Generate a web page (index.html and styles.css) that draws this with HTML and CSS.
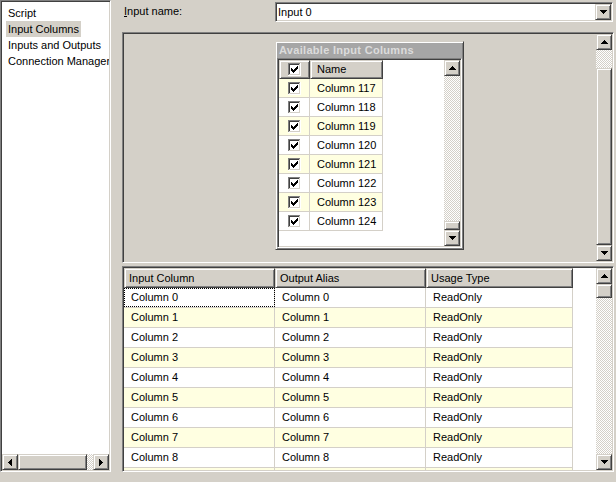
FILE: index.html
```html
<!DOCTYPE html>
<html>
<head>
<meta charset="utf-8">
<link rel="stylesheet" href="styles.css">
</head>
<body>
<div class="app">
  <div class="nav sunken">
    <div class="nav-items">
      <div class="nav-item"><span>Script</span></div>
      <div class="nav-item"><span class="sel">Input Columns</span></div>
      <div class="nav-item"><span>Inputs and Outputs</span></div>
      <div class="nav-item"><span>Connection Managers</span></div>
    </div>
    <div class="hscroll">
      <div class="btn"><svg class="arrow" width="4" height="7"><path d="M3 0h1v7H3V6H2V5H1V4H0V3h1V2h1V1h1z"/></svg></div>
      <div class="hthumb raised"></div>
      <div class="dither"></div>
      <div class="btn"><svg class="arrow" width="4" height="7"><path d="M0 0h1v1h1v1h1v1h1v1H3v1H2v1H1v1H0z"/></svg></div>
    </div>
  </div>

  <div class="main">
    <div class="name-row">
      <div class="name-label"><u>I</u>nput name:</div>
      <div class="combo sunken">
        <span class="combo-text">Input 0</span>
        <div class="btn"><svg class="arrow" width="7" height="4"><path d="M0 0h7v1H6v1H5v1H4v1H3V3H2V2H1V1H0z"/></svg></div>
      </div>
    </div>

    <div class="panel sunken">
      <div class="panel-canvas">
        <div class="avail raised">
          <div class="avail-title">Available Input Columns</div>
          <div class="lv sunken">
            <div class="lv-body">
              <div class="lv-head">
                <div class="lv-hcheck raised">
                  <svg class="cb" width="13" height="13" viewBox="0 0 13 13" shape-rendering="crispEdges"><rect width="13" height="13" fill="#fff"/><path d="M0 0h12v1H1v11H0z" fill="#808080"/><path d="M1 1h10v1H2v9H1z" fill="#404040"/><path d="M12 0h1v13H0v-1h12z" fill="#fff"/><path d="M11 1h1v11H1v-1h10z" fill="#d4d0c8"/><path d="M9 3h1v1H9zM8 4h2v1H8zM3 5h1v1H3zM7 5h3v1H7zM3 6h2v1H3zM6 6h3v1H6zM3 7h5v1H3zM4 8h3v1H4zM5 9h1v1H5z" fill="#000"/></svg>
                </div>
                <div class="lv-hname raised">Name</div>
              </div>
              <div class="lv-row alt"><div class="lv-c1"><svg class="cb" width="13" height="13" viewBox="0 0 13 13" shape-rendering="crispEdges"><rect width="13" height="13" fill="#fff"/><path d="M0 0h12v1H1v11H0z" fill="#808080"/><path d="M1 1h10v1H2v9H1z" fill="#404040"/><path d="M12 0h1v13H0v-1h12z" fill="#fff"/><path d="M11 1h1v11H1v-1h10z" fill="#d4d0c8"/><path d="M9 3h1v1H9zM8 4h2v1H8zM3 5h1v1H3zM7 5h3v1H7zM3 6h2v1H3zM6 6h3v1H6zM3 7h5v1H3zM4 8h3v1H4zM5 9h1v1H5z" fill="#000"/></svg></div><div class="lv-c2">Column 117</div></div>
              <div class="lv-row"><div class="lv-c1"><svg class="cb" width="13" height="13" viewBox="0 0 13 13" shape-rendering="crispEdges"><rect width="13" height="13" fill="#fff"/><path d="M0 0h12v1H1v11H0z" fill="#808080"/><path d="M1 1h10v1H2v9H1z" fill="#404040"/><path d="M12 0h1v13H0v-1h12z" fill="#fff"/><path d="M11 1h1v11H1v-1h10z" fill="#d4d0c8"/><path d="M9 3h1v1H9zM8 4h2v1H8zM3 5h1v1H3zM7 5h3v1H7zM3 6h2v1H3zM6 6h3v1H6zM3 7h5v1H3zM4 8h3v1H4zM5 9h1v1H5z" fill="#000"/></svg></div><div class="lv-c2">Column 118</div></div>
              <div class="lv-row alt"><div class="lv-c1"><svg class="cb" width="13" height="13" viewBox="0 0 13 13" shape-rendering="crispEdges"><rect width="13" height="13" fill="#fff"/><path d="M0 0h12v1H1v11H0z" fill="#808080"/><path d="M1 1h10v1H2v9H1z" fill="#404040"/><path d="M12 0h1v13H0v-1h12z" fill="#fff"/><path d="M11 1h1v11H1v-1h10z" fill="#d4d0c8"/><path d="M9 3h1v1H9zM8 4h2v1H8zM3 5h1v1H3zM7 5h3v1H7zM3 6h2v1H3zM6 6h3v1H6zM3 7h5v1H3zM4 8h3v1H4zM5 9h1v1H5z" fill="#000"/></svg></div><div class="lv-c2">Column 119</div></div>
              <div class="lv-row"><div class="lv-c1"><svg class="cb" width="13" height="13" viewBox="0 0 13 13" shape-rendering="crispEdges"><rect width="13" height="13" fill="#fff"/><path d="M0 0h12v1H1v11H0z" fill="#808080"/><path d="M1 1h10v1H2v9H1z" fill="#404040"/><path d="M12 0h1v13H0v-1h12z" fill="#fff"/><path d="M11 1h1v11H1v-1h10z" fill="#d4d0c8"/><path d="M9 3h1v1H9zM8 4h2v1H8zM3 5h1v1H3zM7 5h3v1H7zM3 6h2v1H3zM6 6h3v1H6zM3 7h5v1H3zM4 8h3v1H4zM5 9h1v1H5z" fill="#000"/></svg></div><div class="lv-c2">Column 120</div></div>
              <div class="lv-row alt"><div class="lv-c1"><svg class="cb" width="13" height="13" viewBox="0 0 13 13" shape-rendering="crispEdges"><rect width="13" height="13" fill="#fff"/><path d="M0 0h12v1H1v11H0z" fill="#808080"/><path d="M1 1h10v1H2v9H1z" fill="#404040"/><path d="M12 0h1v13H0v-1h12z" fill="#fff"/><path d="M11 1h1v11H1v-1h10z" fill="#d4d0c8"/><path d="M9 3h1v1H9zM8 4h2v1H8zM3 5h1v1H3zM7 5h3v1H7zM3 6h2v1H3zM6 6h3v1H6zM3 7h5v1H3zM4 8h3v1H4zM5 9h1v1H5z" fill="#000"/></svg></div><div class="lv-c2">Column 121</div></div>
              <div class="lv-row"><div class="lv-c1"><svg class="cb" width="13" height="13" viewBox="0 0 13 13" shape-rendering="crispEdges"><rect width="13" height="13" fill="#fff"/><path d="M0 0h12v1H1v11H0z" fill="#808080"/><path d="M1 1h10v1H2v9H1z" fill="#404040"/><path d="M12 0h1v13H0v-1h12z" fill="#fff"/><path d="M11 1h1v11H1v-1h10z" fill="#d4d0c8"/><path d="M9 3h1v1H9zM8 4h2v1H8zM3 5h1v1H3zM7 5h3v1H7zM3 6h2v1H3zM6 6h3v1H6zM3 7h5v1H3zM4 8h3v1H4zM5 9h1v1H5z" fill="#000"/></svg></div><div class="lv-c2">Column 122</div></div>
              <div class="lv-row alt"><div class="lv-c1"><svg class="cb" width="13" height="13" viewBox="0 0 13 13" shape-rendering="crispEdges"><rect width="13" height="13" fill="#fff"/><path d="M0 0h12v1H1v11H0z" fill="#808080"/><path d="M1 1h10v1H2v9H1z" fill="#404040"/><path d="M12 0h1v13H0v-1h12z" fill="#fff"/><path d="M11 1h1v11H1v-1h10z" fill="#d4d0c8"/><path d="M9 3h1v1H9zM8 4h2v1H8zM3 5h1v1H3zM7 5h3v1H7zM3 6h2v1H3zM6 6h3v1H6zM3 7h5v1H3zM4 8h3v1H4zM5 9h1v1H5z" fill="#000"/></svg></div><div class="lv-c2">Column 123</div></div>
              <div class="lv-row"><div class="lv-c1"><svg class="cb" width="13" height="13" viewBox="0 0 13 13" shape-rendering="crispEdges"><rect width="13" height="13" fill="#fff"/><path d="M0 0h12v1H1v11H0z" fill="#808080"/><path d="M1 1h10v1H2v9H1z" fill="#404040"/><path d="M12 0h1v13H0v-1h12z" fill="#fff"/><path d="M11 1h1v11H1v-1h10z" fill="#d4d0c8"/><path d="M9 3h1v1H9zM8 4h2v1H8zM3 5h1v1H3zM7 5h3v1H7zM3 6h2v1H3zM6 6h3v1H6zM3 7h5v1H3zM4 8h3v1H4zM5 9h1v1H5z" fill="#000"/></svg></div><div class="lv-c2">Column 124</div></div>
            </div>
            <div class="vscroll">
              <div class="btn"><svg class="arrow" width="7" height="4"><path d="M3 0h1v1h1v1h1v1h1v1H0V3h1V2h1V1h1z"/></svg></div>
              <div class="dither"></div>
              <div class="lv-thumb raised"></div>
              <div class="btn"><svg class="arrow" width="7" height="4"><path d="M0 0h7v1H6v1H5v1H4v1H3V3H2V2H1V1H0z"/></svg></div>
            </div>
          </div>
        </div>
      </div>
      <div class="vscroll">
        <div class="btn"><svg class="arrow" width="7" height="4"><path d="M3 0h1v1h1v1h1v1h1v1H0V3h1V2h1V1h1z"/></svg></div>
        <div class="dither panel-dither"></div>
        <div class="panel-thumb raised"></div>
        <div class="btn"><svg class="arrow" width="7" height="4"><path d="M0 0h7v1H6v1H5v1H4v1H3V3H2V2H1V1H0z"/></svg></div>
      </div>
    </div>

    <div class="grid sunken">
      <div class="grid-body">
        <div class="g-head">
          <div class="g-h raised w1">Input Column</div>
          <div class="g-h raised w2">Output Alias</div>
          <div class="g-h raised w3">Usage Type</div>
        </div>
        <div class="g-row"><div class="g-c w1 focus">Column 0</div><div class="g-c w2">Column 0</div><div class="g-c w3">ReadOnly</div></div>
        <div class="g-row alt"><div class="g-c w1">Column 1</div><div class="g-c w2">Column 1</div><div class="g-c w3">ReadOnly</div></div>
        <div class="g-row"><div class="g-c w1">Column 2</div><div class="g-c w2">Column 2</div><div class="g-c w3">ReadOnly</div></div>
        <div class="g-row alt"><div class="g-c w1">Column 3</div><div class="g-c w2">Column 3</div><div class="g-c w3">ReadOnly</div></div>
        <div class="g-row"><div class="g-c w1">Column 4</div><div class="g-c w2">Column 4</div><div class="g-c w3">ReadOnly</div></div>
        <div class="g-row alt"><div class="g-c w1">Column 5</div><div class="g-c w2">Column 5</div><div class="g-c w3">ReadOnly</div></div>
        <div class="g-row"><div class="g-c w1">Column 6</div><div class="g-c w2">Column 6</div><div class="g-c w3">ReadOnly</div></div>
        <div class="g-row alt"><div class="g-c w1">Column 7</div><div class="g-c w2">Column 7</div><div class="g-c w3">ReadOnly</div></div>
        <div class="g-row"><div class="g-c w1">Column 8</div><div class="g-c w2">Column 8</div><div class="g-c w3">ReadOnly</div></div>
        <div class="g-row alt"><div class="g-c w1">Column 9</div><div class="g-c w2">Column 9</div><div class="g-c w3">ReadOnly</div></div>
      </div>
      <div class="vscroll">
        <div class="btn"><svg class="arrow" width="7" height="4"><path d="M3 0h1v1h1v1h1v1h1v1H0V3h1V2h1V1h1z"/></svg></div>
        <div class="grid-thumb raised"></div>
        <div class="dither"></div>
        <div class="btn"><svg class="arrow" width="7" height="4"><path d="M0 0h7v1H6v1H5v1H4v1H3V3H2V2H1V1H0z"/></svg></div>
      </div>
    </div>
  </div>
</div>
</body>
</html>
```
FILE: styles.css
```css
* { box-sizing: border-box; }
html, body { margin: 0; height: 100%; }
body {
  background: #d4d0c8;
  font-family: "Liberation Sans", Arial, sans-serif;
  font-size: 11px;
  color: #000;
  overflow: hidden;
}
svg { display: block; }
.arrow { fill: #000; shape-rendering: crispEdges; }

.sunken {
  border: 1px solid;
  border-color: #808080 #fff #fff #808080;
  box-shadow: inset 1px 1px #404040, inset -1px -1px #d4d0c8;
  padding: 1px;
}
.raised {
  border: 1px solid;
  border-color: #d4d0c8 #404040 #404040 #d4d0c8;
  box-shadow: inset 1px 1px #fff, inset -1px -1px #808080;
  background: #d4d0c8;
}
.btn {
  width: 16px;
  height: 16px;
  flex: none;
  border: 1px solid;
  border-color: #d4d0c8 #404040 #404040 #d4d0c8;
  box-shadow: inset 1px 1px #fff, inset -1px -1px #808080;
  background: #d4d0c8;
  display: flex;
  align-items: center;
  justify-content: center;
}
.dither {
  flex: 1;
  background-image: conic-gradient(#fff 0 25%, #d4d0c8 0 50%, #fff 0 75%, #d4d0c8 0);
  background-size: 2px 2px;
}

.app { display: flex; width: 616px; height: 482px; }

/* left list */
.nav {
  width: 111px;
  height: 472px;
  flex: none;
  background: #fff;
  display: flex;
  flex-direction: column;
}
.nav-items { flex: 1; padding-top: 3px; overflow: hidden; white-space: nowrap; }
.nav-item { height: 16px; line-height: 16px; padding-left: 4px; }
.nav-item span { display: inline-block; padding: 0 2px; }
.nav-item .sel { background: #d4d0c8; }
.hscroll { height: 16px; display: flex; }
.hthumb { width: 69px; flex: none; }

/* main column */
.main {
  margin-left: 11px;
  width: 492px;
  display: flex;
  flex-direction: column;
}
.name-row {
  display: flex;
  align-items: center;
  height: 20px;
  margin-top: 2px;
  margin-right: 1px;
}
.name-label { width: 153px; padding-left: 2px; padding-bottom: 2px; }
.name-label u { text-decoration-thickness: 1px; text-underline-offset: 1px; }
.combo {
  flex: 1;
  height: 20px;
  background: #fff;
  display: flex;
  align-items: center;
}
.combo-text { flex: 1; padding-left: 1px; }

.panel {
  margin-top: 10px;
  height: 231px;
  display: flex;
}
.panel-canvas { flex: 1; padding: 7px 0 0 151px; }
.vscroll { width: 16px; flex: none; display: flex; flex-direction: column; }
.panel-dither { flex: none; height: 18px; }
.panel-thumb { flex: 1; }

/* available input columns window */
.avail {
  width: 189px;
  height: 209px;
  padding: 1px;
  display: flex;
  flex-direction: column;
}
.avail-title {
  height: 15px;
  line-height: 15px;
  background: #a6a6a6;
  color: #dcdcdc;
  font-weight: bold;
  padding-left: 2px;
  letter-spacing: 0.3px;
  white-space: nowrap;
  overflow: hidden;
}
.lv { flex: 1; background: #fff; display: flex; }
.lv-body { flex: 1; }
.lv-head { display: flex; height: 19px; }
.lv-hcheck { width: 31px; display: flex; align-items: center; justify-content: center; }
.lv-hname { width: 73px; padding-left: 6px; line-height: 17px; }
.lv-row {
  display: flex;
  width: 104px;
  height: 19px;
  border-bottom: 1px solid #d4d0c8;
}
.lv-row.alt { background: #ffffe1; }
.lv-c1 {
  width: 31px;
  border-right: 1px solid #d4d0c8;
  display: flex;
  align-items: center;
  justify-content: center;
}
.lv-c2 {
  width: 73px;
  border-right: 1px solid #d4d0c8;
  padding-left: 7px;
  line-height: 18px;
  white-space: nowrap;
}
.lv-thumb { height: 9px; flex: none; }

/* bottom grid */
.grid {
  margin-top: 3px;
  height: 206px;
  background: #fff;
  display: flex;
}
.grid-body { flex: 1; overflow: hidden; }
.g-head { display: flex; height: 20px; }
.g-h { padding-left: 4px; line-height: 18px; white-space: nowrap; }
.w1 { width: 151px; }
.w2 { width: 151px; }
.w3 { width: 147px; }
.g-row {
  display: flex;
  width: 449px;
  height: 20px;
  border-bottom: 1px solid #d4d0c8;
}
.g-row.alt { background: #ffffe1; }
.g-c {
  border-right: 1px solid #d4d0c8;
  padding-left: 7px;
  line-height: 19px;
  white-space: nowrap;
}
.g-c.focus { outline: 1px dotted #000; outline-offset: -1px; }
.grid-thumb { height: 14px; flex: none; }
```
